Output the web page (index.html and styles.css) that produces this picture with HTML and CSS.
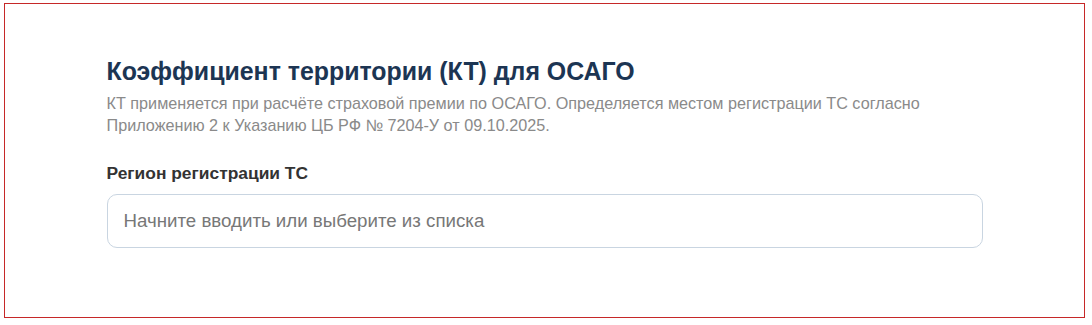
FILE: index.html
```html
<!DOCTYPE html>
<html lang="ru">
<head>
   <meta charset="UTF-8">
   <title>Коэффициент территории</title>
   <link rel="stylesheet" href="styles.css">
</head>
<body>
<div class="frame">
   <div class="calc">
      <h2 class="calc-title">Коэффициент территории (КТ) для ОСАГО</h2>
      <p class="calc-desc">КТ применяется при расчёте страховой премии по ОСАГО. Определяется местом регистрации ТС согласно Приложению 2 к Указанию ЦБ РФ № 7204-У от 09.10.2025.</p>
      <label class="calc-label" for="region">Регион регистрации ТС</label>
      <input class="calc-input" id="region" type="text" placeholder="Начните вводить или выберите из списка">
   </div>
</div>
</body>
</html>
```

FILE: styles.css
```css
* {
   box-sizing: border-box;
}

body {
   margin: 0;
   padding: 3px 0 0 4px;
   font-family: "Liberation Sans", Arial, sans-serif;
   background: #fff;
}

.frame {
   width: 1081px;
   height: 315px;
   border: 1px solid #c62828;
   padding-top: 52px;
}

.calc {
   width: 876px;
   margin: 0 auto;
}

.calc-title {
   margin: 0;
   font-size: 24.9px;
   line-height: 30px;
   font-weight: bold;
   color: #1c3553;
}

.calc-desc {
   margin: 6px 0 0;
   font-size: 16.2px;
   line-height: 22px;
   color: #8a8a8a;
}

.calc-label {
   display: block;
   margin-top: 26px;
   font-size: 17.4px;
   line-height: 22px;
   font-weight: bold;
   color: #333;
}

.calc-input {
   display: block;
   width: 100%;
   height: 54px;
   margin-top: 10px;
   padding: 0 16px;
   border: 1px solid #c9d5e1;
   border-radius: 10px;
   font-family: inherit;
   font-size: 18.7px;
   color: #333;
   outline: none;
}

.calc-input::placeholder {
   color: #777;
}
```
